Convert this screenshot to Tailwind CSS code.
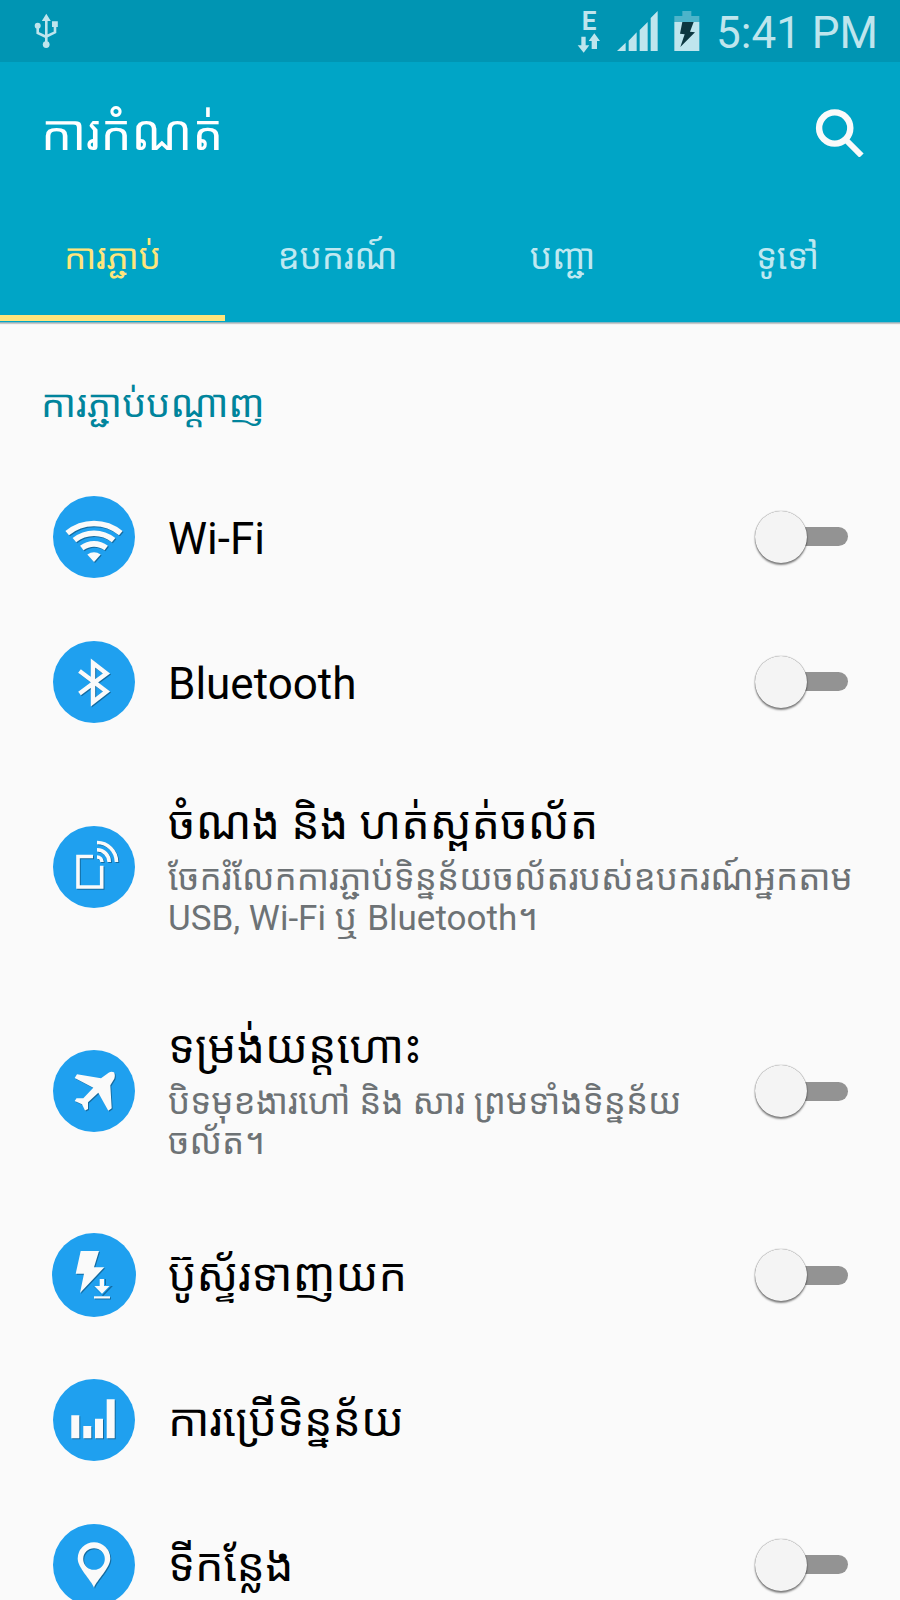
<!DOCTYPE html>
<html lang="km">
<head>
<meta charset="utf-8">
<meta name="viewport" content="width=device-width, initial-scale=1">
<title>ការកំណត់</title>
<script src="https://cdn.jsdelivr.net/npm/@tailwindcss/browser@4"></script>
</head>
<body class="flex h-screen flex-col overflow-hidden bg-[#fafafa] font-[Roboto,'Noto_Sans_Khmer','Noto_Sans',sans-serif] text-black">

<div class="flex h-[62px] shrink-0 items-center justify-between bg-[#0095b3] pr-[22px] pl-[34px] text-[#bfe5ed]">
  <svg class="h-9 w-6" viewBox="0 0 24 36" fill="currentColor" aria-label="USB">
    <path d="M12.3 8V31M3.7 13V20L12.3 24M21 13V19.3L12.3 23.5" fill="none" stroke="currentColor" stroke-width="2.6"/>
    <path d="M12.3.7 16.8 8H7.8zM18 8.3h5.8v5.6H18z"/><circle cx="3.7" cy="12.7" r="3"/><circle cx="12.2" cy="31.6" r="3.4"/>
  </svg>
  <div class="flex items-center">
    <div class="flex w-6 flex-col items-center">
      <span class="text-[26px] leading-6 font-bold">E</span>
      <svg class="h-5 w-6" viewBox="51 99 72 60" fill="currentColor"><path d="M64 110h13v26h11l-17 22-18-22h11zM95 147v-24h-9l17-23 17 23h-9v24z"/></svg>
    </div>
    <svg class="ml-4 h-10 w-[41px]" viewBox="172 32 123 120" fill="currentColor" aria-label="Signal"><path d="M172 152l26-25v25zM207 152v-31l24-25v56zM240 152V89l24-24v87zM273 152V53l21-21v120z"/></svg>
    <svg class="ml-4 h-10 w-[26px]" viewBox="344 30 78 120" fill="currentColor" aria-label="Battery charging"><path d="M369 30h27v15h24v18h-75V45h24z" fill="#4db4ca"/><path d="M345 63h75v87h-75z"/><path d="M369 63h34l-11 29 15 2-44 44 13-38-14-2z" fill="#0c3740"/></svg>
    <span class="ml-4 pt-1 text-[44px] leading-[52px]">5:41 PM</span>
  </div>
</div>

<header class="flex h-[261px] shrink-0 flex-col border-b border-[#8ab5c2] bg-[#00a5c6] shadow-[0_1px_1px_#0003]">
  <div class="flex h-[140px] items-center justify-between pr-9 pl-[41px]">
    <h1 class="pt-1 text-[49px] leading-[60px] text-white">ការកំណត់</h1>
    <button class="size-[50px]" aria-label="Search">
      <svg class="size-[50px]" viewBox="0 0 50 50" fill="none" stroke="#fafafa"><circle cx="20.7" cy="21" r="15.6" stroke-width="6.4"/><path d="M31.5 32.500 47.500 48.500" stroke-width="6"/></svg>
    </button>
  </div>
  <nav class="grid flex-1 grid-cols-4 pb-px text-[35px] leading-[44px] text-[#bfe8f1]">
    <button class="border-b-[6px] border-[#ffe57c] pb-0.5 text-[#ffe57c]">ការភ្ជាប់</button>
    <button class="border-b-[6px] border-transparent pb-0.5">ឧបករណ៍</button>
    <button class="border-b-[6px] border-transparent pb-0.5">បញ្ជា</button>
    <button class="border-b-[6px] border-transparent pb-0.5">ទូទៅ</button>
  </nav>
</header>

<main class="min-h-0 flex-1 overflow-y-auto [scrollbar-width:none]">
  <h2 class="flex h-[141px] items-center pt-5 pl-[41px] text-[38px] leading-[44px] text-[#00849c]">ការភ្ជាប់បណ្តាញ</h2>

  <label class="flex h-[145px] items-center pr-[52px] pl-[53px]">
    <svg class="size-[82px] shrink-0" viewBox="0 0 82 82"><circle cx="41" cy="41" r="41" fill="#1fa0ef"/>
      <g class="drop-shadow-[1px_1px_0_#0005]" fill="none" stroke="#fafafa" stroke-width="5.6"><path d="M14.2 37.2A42 42 0 0 1 67.8 37.2M21.4 44.2A31 31 0 0 1 60.6 44.2M28.8 52A20 20 0 0 1 53.2 52"/><path d="M34.3 58.5Q41 54 47.7 58.5L41 66z" fill="#fafafa" stroke="none"/></g></svg>
    <span class="ml-[33px] min-w-0 flex-1 pt-1 text-[44px] leading-[54px]">Wi-Fi</span>
    <span class="relative flex h-14 w-[93px] items-center"><input type="checkbox" role="switch" class="peer absolute inset-0 size-full opacity-0"><span class="ml-6 h-[19px] flex-1 rounded-r-full bg-[#939393]"></span><span class="absolute top-[2px] left-0 size-[52px] rounded-full bg-[#f4f4f4] shadow-[0_0_1px_#000a,0_2px_2px_#0007]"></span></span>
  </label>

  <label class="flex h-[145px] items-center pr-[52px] pl-[53px]">
    <svg class="size-[82px] shrink-0" viewBox="0 0 82 82"><circle cx="41" cy="41" r="41" fill="#1fa0ef"/>
      <path class="drop-shadow-[1px_1px_0_#0005]" fill="none" stroke="#fafafa" stroke-width="4.4" d="M26.5 30 53.5 50.5 40 61V22L53.5 32.5 26.5 52.5"/></svg>
    <span class="ml-[33px] min-w-0 flex-1 pt-1 text-[44px] leading-[54px]">Bluetooth</span>
    <span class="relative flex h-14 w-[93px] items-center"><input type="checkbox" role="switch" class="peer absolute inset-0 size-full opacity-0"><span class="ml-6 h-[19px] flex-1 rounded-r-full bg-[#939393]"></span><span class="absolute top-[2px] left-0 size-[52px] rounded-full bg-[#f4f4f4] shadow-[0_0_1px_#000a,0_2px_2px_#0007]"></span></span>
  </label>

  <a href="#tethering" class="flex h-[225px] items-center pr-8 pl-[53px]">
    <svg class="size-[82px] shrink-0" viewBox="0 0 82 82"><circle cx="41" cy="41" r="41" fill="#1fa0ef"/>
      <path class="drop-shadow-[1px_1px_0_#0005]" fill="none" stroke="#fafafa" stroke-width="3.6" d="M40 30.5H25V61H48.7V39.7M44 16.5A19.5 19.5 0 0 1 63.5 36M44 23.8A12.2 12.2 0 0 1 56.2 36M44 31A5 5 0 0 1 49 36"/></svg>
    <span class="ml-[33px] flex min-w-0 flex-1 flex-col gap-1.5">
      <span class="text-[45px] leading-[58px]">ចំណង និង ហត់ស្ពត់ចល័ត</span>
      <span class="text-[35px] leading-10 text-[#6d7275]">ចែករំលែកការភ្ជាប់ទិន្នន័យចល័តរបស់ឧបករណ៍អ្នកតាម<br>USB, Wi-Fi ឬ Bluetooth។</span>
    </span>
  </a>

  <label class="flex h-[224px] items-center pr-[52px] pl-[53px]">
    <svg class="size-[82px] shrink-0" viewBox="0 0 82 82"><circle cx="41" cy="41" r="41" fill="#1fa0ef"/>
      <path class="drop-shadow-[1px_1px_0_#0005]" fill="#fafafa" d="M61 22.3Q62.500 25 61.300 28.700L57.300 35.300 58.700 58.300 55.300 60.700 45.300 42.700 35 52.300V59L32 60.500 29 54.300 21.700 51 23.500 48.300H30.300L40.300 37.700 21.700 28 24 24.300 48 28.300 56 22.500Q58.500 21 61 22.300z"/></svg>
    <span class="ml-[33px] flex min-w-0 flex-1 flex-col gap-1.5">
      <span class="text-[45px] leading-[58px]">ទម្រង់យន្តហោះ</span>
      <span class="text-[35px] leading-10 text-[#6d7275]">បិទមុខងារហៅ និង សារ ព្រមទាំងទិន្នន័យ<br>ចល័ត។</span>
    </span>
    <span class="relative flex h-14 w-[93px] items-center"><input type="checkbox" role="switch" class="peer absolute inset-0 size-full opacity-0"><span class="ml-6 h-[19px] flex-1 rounded-r-full bg-[#939393]"></span><span class="absolute top-[2px] left-0 size-[52px] rounded-full bg-[#f4f4f4] shadow-[0_0_1px_#000a,0_2px_2px_#0007]"></span></span>
  </label>

  <label class="flex h-[144px] items-center pr-[52px] pl-[52px]">
    <svg class="size-[84px] shrink-0" viewBox="0 0 84 84"><circle cx="42" cy="42" r="42" fill="#1fa0ef"/>
      <g class="drop-shadow-[1px_1px_0_#0005]" fill="#fafafa"><path d="M28.700 18H47L42 34.300H52.300L28 60 32 40.700H23.700z"/><path d="M47.700 46H52V53H57.500L50 60.700 42.500 53H47.700z" stroke="#1fa0ef" stroke-width="2" paint-order="stroke"/><path d="M42 63.300H58V65.500H42z"/></g></svg>
    <span class="ml-8 min-w-0 flex-1 pt-0.5 text-[45px] leading-[54px]">ប៊ូស្ទ័រទាញយក</span>
    <span class="relative flex h-14 w-[93px] items-center"><input type="checkbox" role="switch" class="peer absolute inset-0 size-full opacity-0"><span class="ml-6 h-[19px] flex-1 rounded-r-full bg-[#939393]"></span><span class="absolute top-[2px] left-0 size-[52px] rounded-full bg-[#f4f4f4] shadow-[0_0_1px_#000a,0_2px_2px_#0007]"></span></span>
  </label>

  <a href="#data-usage" class="flex h-[145px] items-center pr-8 pl-[53px]">
    <svg class="size-[82px] shrink-0" viewBox="0 0 82 82"><circle cx="41" cy="41" r="41" fill="#1fa0ef"/>
      <path class="drop-shadow-[1px_1px_0_#0005]" fill="#fafafa" d="M18.300 36.300h8v23h-8zM30.300 47h8v12.300h-8zM42 39.700h8v19.600h-8zM53.700 20.300h8v39h-8z"/></svg>
    <span class="ml-[33px] min-w-0 flex-1 pt-0.5 text-[45px] leading-[54px]">ការប្រើទិន្នន័យ</span>
  </a>

  <label class="flex h-[145px] items-center pr-[52px] pl-[53px]">
    <svg class="size-[82px] shrink-0" viewBox="0 0 82 82"><circle cx="41" cy="41" r="41" fill="#1fa0ef"/>
      <path class="drop-shadow-[1px_1px_0_#0005]" fill="#fafafa" fill-rule="evenodd" d="M41 63.700C38 56 24.700 44 24.700 34.600A16.300 16.300 0 0 1 57.300 34.600C57.300 44 44 56 41 63.700zM41 24.200A10.800 10.800 0 1 0 41 45.800 10.800 10.800 0 1 0 41 24.200z"/></svg>
    <span class="ml-[33px] min-w-0 flex-1 pt-0.5 text-[45px] leading-[54px]">ទីកន្លែង</span>
    <span class="relative flex h-14 w-[93px] items-center"><input type="checkbox" role="switch" class="peer absolute inset-0 size-full opacity-0"><span class="ml-6 h-[19px] flex-1 rounded-r-full bg-[#939393]"></span><span class="absolute top-[2px] left-0 size-[52px] rounded-full bg-[#f4f4f4] shadow-[0_0_1px_#000a,0_2px_2px_#0007]"></span></span>
  </label>
</main>
</body>
</html>
